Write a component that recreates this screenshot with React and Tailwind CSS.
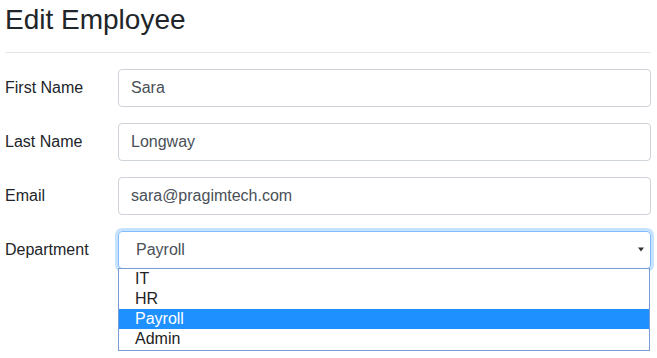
import { useState } from 'react';

const FIELDS = [
  { label: 'First Name', value: 'Sara' },
  { label: 'Last Name', value: 'Longway' },
  { label: 'Email', value: 'sara@pragimtech.com' },
];

const DEPARTMENTS = ['IT', 'HR', 'Payroll', 'Admin'];

export default function App() {
  const [dept] = useState('Payroll');

  return (
    <div className="w-[657px] h-[358px] bg-white font-['Liberation_Sans',Arial,sans-serif] text-[#212529] overflow-hidden">
      <div className="w-[646px] ml-[5px]">
        <h3 className="mt-[3px] text-[28px] leading-[1.2]">Edit Employee</h3>
        <hr className="mt-[15px] border-0 border-t border-[#e5e5e5]" />

        <div className="mt-[16px] flex flex-col gap-4">
          {FIELDS.map((f) => (
            <div key={f.label} className="flex items-center h-[38px]">
              <label className="w-[113px] text-[16px]">{f.label}</label>
              <div className="flex-1 h-[38px] border border-[#ced4da] rounded-[4px] px-3 flex items-center text-[16px] text-[#495057]">
                {f.value}
              </div>
            </div>
          ))}

          {/* Department select, opened */}
          <div className="flex items-center h-[38px]">
            <label className="w-[113px] text-[16px]">Department</label>
            <div className="relative flex-1 h-[38px]">
              <div className="h-[38px] border border-[#80bdff] rounded-[4px] shadow-[0_0_0_3px_rgba(0,123,255,0.22)] pl-[17px] pr-[6px] flex items-center justify-between text-[16px] text-[#495057]">
                <span>{dept}</span>
                <svg width="6" height="5" viewBox="0 0 6 5">
                  <path d="M0 0.5h6L3 4.5z" fill="#333" />
                </svg>
              </div>
              <div className="absolute left-0 right-[1px] top-[37px] border border-[#7a9bd4] bg-white z-10">
                {DEPARTMENTS.map((d) => (
                  <div
                    key={d}
                    className={`h-[20.25px] leading-[20px] pl-4 text-[16px] ${d === dept ? 'bg-[#1e90ff] text-white' : 'text-[#222]'}`}
                  >
                    {d}
                  </div>
                ))}
              </div>
            </div>
          </div>
        </div>
      </div>
    </div>
  );
}
